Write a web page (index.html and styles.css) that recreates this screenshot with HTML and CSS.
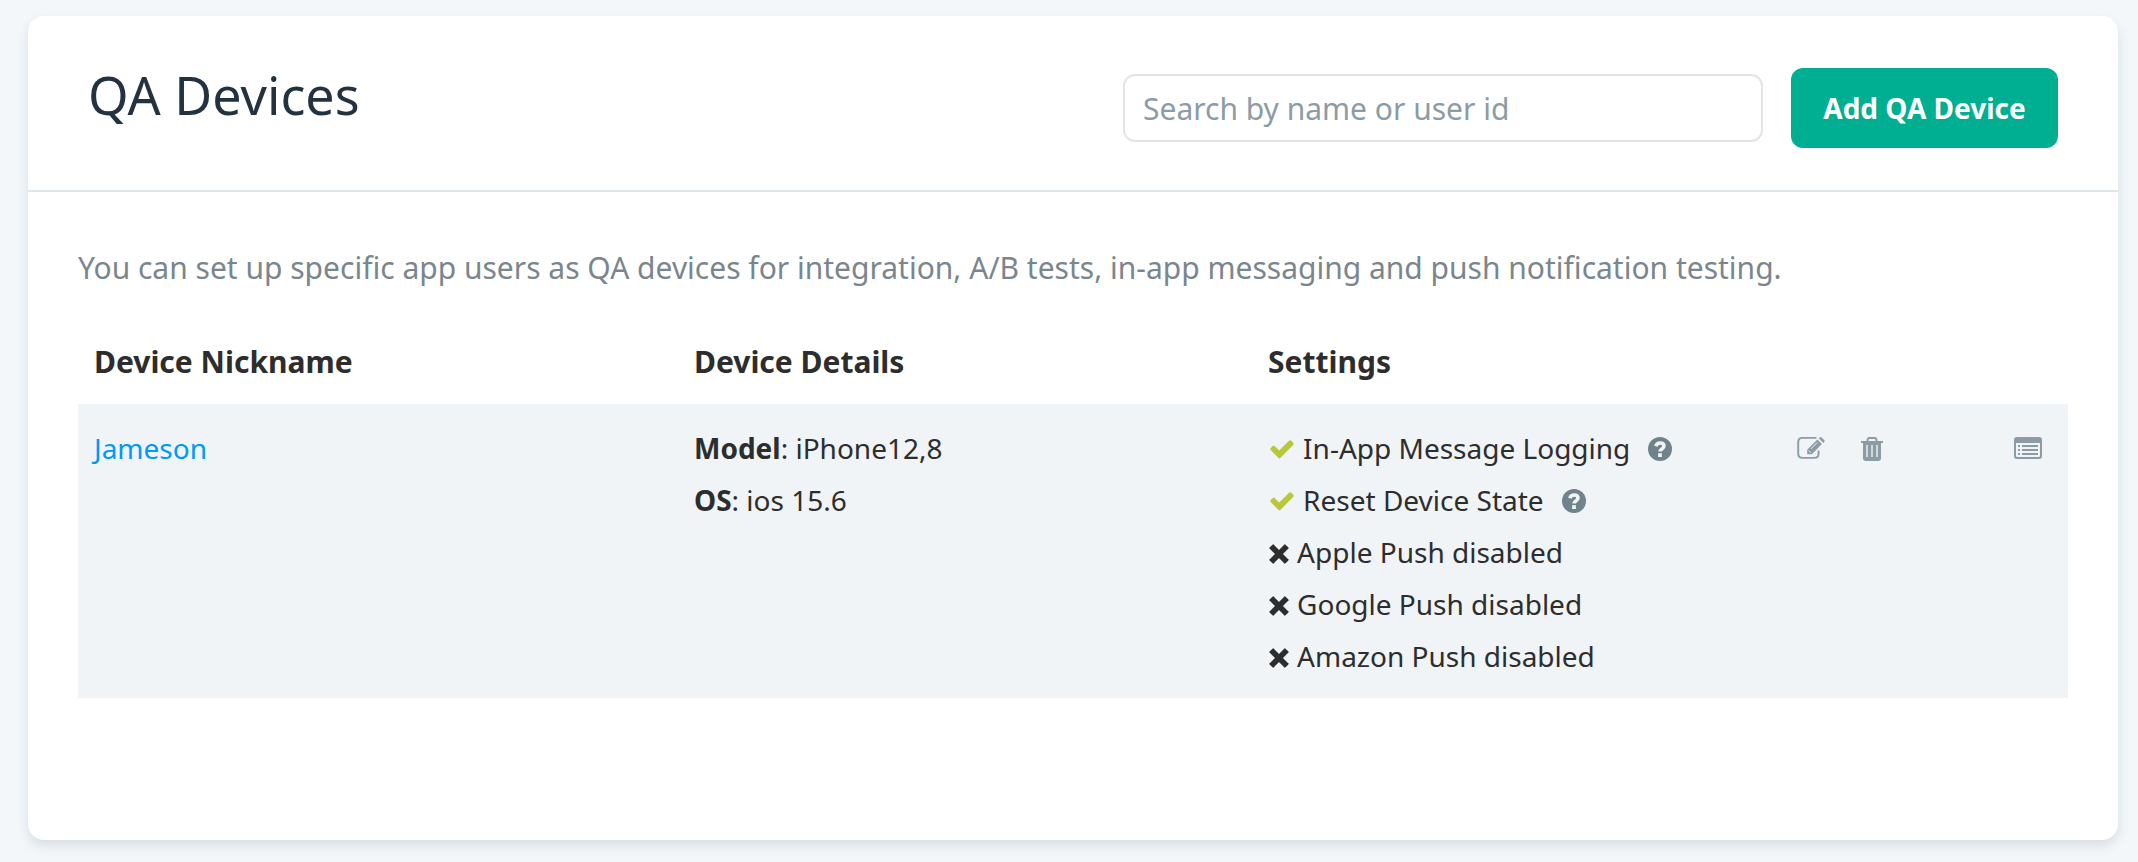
FILE: index.html
```html
<!DOCTYPE html>
<html lang="en">
<head>
<meta charset="utf-8">
<title>QA Devices</title>
<link rel="stylesheet" href="styles.css">
</head>
<body>
<svg class="sprite" aria-hidden="true">
  <symbol id="check" viewBox="0 0 24 20"><path d="M.700 8.100 2.800 6Q3.700 5.100 4.600 6L9.200 10.600 19.300.600Q20.200-.300 21.100.600L23.400 2.900Q24.300 3.800 23.400 4.700L10.300 18Q9.400 18.900 8.500 18L.700 9.900Q-.200 9 .700 8.100Z" fill="currentColor"/></symbol>
  <symbol id="cross" viewBox="0 0 20 20"><path d="M4.300 4.300 15.700 15.700M15.700 4.300 4.300 15.700" fill="none" stroke="currentColor" stroke-width="5.600" stroke-linecap="square"/><path d="M4 1.600 1.600 4M16 1.600 18.400 4M4 18.400 1.600 16M16 18.400 18.400 16" fill="none" stroke="currentColor" stroke-width="2" stroke-linecap="round"/></symbol>
  <symbol id="help" viewBox="0 0 24 24"><circle cx="12" cy="12" r="12" fill="currentColor"/><path d="M7.900 9.300C8.500 7 10 6 12 6c2.400 0 4 1.200 4 3.100 0 2.900-4 2.700-4 5.400" fill="none" stroke="#f0f4f7" stroke-width="3.600"/><path d="M10.100 16.200h3.800v3.800h-3.800z" fill="#f0f4f7"/></symbol>
  <symbol id="edit" viewBox="0 1 28 24"><path d="M19.500 1.900H5.500Q1.200 1.900 1.200 6.200V17.500Q1.200 21.900 5.500 21.900H17.500Q21.600 21.900 21.600 17.500V14.500" fill="none" stroke="currentColor" stroke-width="1.900"/><path d="M10.200 13.800 20.400 3.600 24.900 8.100 14.900 18.300H10.200Z M21.800 2.300 22.600 1.500Q23.600.700 24.600 1.600L27.100 4.100Q28.100 5.100 27.200 6.100L26.300 6.900Z" fill="currentColor"/><path d="M14 12.800 20.100 6.700M11.800 14.600 13.900 16.700" stroke="#f0f4f7" stroke-width="1"/></symbol>
  <symbol id="trash" viewBox="0 0 22 24"><path d="M6.500 4.500V3Q6.500 1 8.500 1H13.500Q15.500 1 15.500 3V4.500" fill="none" stroke="currentColor" stroke-width="1.900"/><path d="M0 4H22V6H20V21Q20 24 17 24H5Q2 24 2 21V6H0ZM5.300 8V20H6.700V8ZM10.300 8V20H11.700V8ZM15.300 8V20H16.700V8Z" fill="currentColor" fill-rule="evenodd"/></symbol>
  <symbol id="log" viewBox="0 0 28 22"><path d="M3 0H25Q28 0 28 3V19Q28 22 25 22H3Q0 22 0 19V3Q0 0 3 0ZM2 6V18.500Q2 20 3.500 20H24.500Q26 20 26 18.500V6Z" fill="currentColor" fill-rule="evenodd"/><path d="M4 8h2v2H4zM8 8h16v2H8zM4 12h2v2H4zM8 12h16v2H8zM4 16h2v2H4zM8 16h16v2H8z" fill="currentColor"/></symbol>
</svg>
<main class="card">
  <header class="card-header">
    <h1 class="title">QA Devices</h1>
    <div class="tools">
      <input class="search" type="search" aria-label="Search by name or user id" placeholder="Search by name or user id">
      <button class="add" type="button">Add QA Device</button>
    </div>
  </header>
  <section class="card-body">
    <p class="intro">You can set up specific app users as QA devices for integration, A/B tests, in-app messaging and push notification testing.</p>
    <table class="devices">
      <colgroup><col class="col-name"><col class="col-details"><col class="col-settings"><col class="col-actions"></colgroup>
      <thead>
        <tr><th scope="col">Device Nickname</th><th scope="col">Device Details</th><th scope="col">Settings</th><td></td></tr>
      </thead>
      <tbody>
        <tr>
          <td><a class="name" href="#jameson">Jameson</a></td>
          <td>
            <div><strong>Model</strong>: iPhone12,8</div>
            <div><strong>OS</strong>: ios 15.6</div>
          </td>
          <td>
            <ul class="settings">
              <li class="setting"><svg class="check"><use href="#check"/></svg>In-App Message Logging<button class="icon-button help" type="button" aria-label="About in-app message logging"><svg class="help-icon"><use href="#help"/></svg></button></li>
              <li class="setting"><svg class="check"><use href="#check"/></svg>Reset Device State<button class="icon-button help" type="button" aria-label="About reset device state"><svg class="help-icon"><use href="#help"/></svg></button></li>
              <li class="setting"><svg class="cross"><use href="#cross"/></svg>Apple Push disabled</li>
              <li class="setting"><svg class="cross"><use href="#cross"/></svg>Google Push disabled</li>
              <li class="setting"><svg class="cross"><use href="#cross"/></svg>Amazon Push disabled</li>
            </ul>
          </td>
          <td>
            <div class="actions">
              <button class="icon-button" type="button" aria-label="Edit"><svg class="edit-icon"><use href="#edit"/></svg></button>
              <button class="icon-button" type="button" aria-label="Delete"><svg class="trash-icon"><use href="#trash"/></svg></button>
              <button class="icon-button log" type="button" aria-label="View log"><svg class="log-icon"><use href="#log"/></svg></button>
            </div>
          </td>
        </tr>
      </tbody>
    </table>
  </section>
</main>
</body>
</html>
```
FILE: styles.css
```css
* { box-sizing: border-box; }

body {
  margin: 0;
  padding: 16px 20px 22px 28px;
  background: #f3f7fa;
  color: #2d2d2d;
  font: 28px/52px "Noto Sans", sans-serif;
}

.sprite { display: none; }

.card {
  background: #fff;
  border-radius: 16px;
  box-shadow: 0 6px 12px rgba(34, 51, 64, 0.12);
}

.card-header {
  display: flex;
  align-items: flex-start;
  justify-content: space-between;
  padding: 52px 60px 42px;
  border-bottom: 2px solid #dfe5e8;
}

.title {
  margin: 0;
  color: #223240;
  font-size: 52px;
  font-weight: 400;
  line-height: 54px;
}

.tools {
  display: flex;
  align-items: center;
  gap: 28px;
}

.search {
  width: 640px;
  height: 68px;
  padding: 0 18px;
  border: 2px solid #dfe5e8;
  border-radius: 12px;
  background: #fff;
  color: #2d2d2d;
  font: 30px "Noto Sans", sans-serif;
  appearance: none;
}

.search::placeholder { color: #8c9ca5; }

.add {
  min-width: 267px;
  height: 80px;
  padding: 0 32px;
  border: 0;
  border-radius: 12px;
  background: #00af91;
  color: #fff;
  font: 700 28px "Noto Sans", sans-serif;
}

.card-body { padding: 50px 50px 142px; }

.intro {
  margin: 0;
  color: #7a868d;
  font-size: 30px;
}

.devices {
  width: 100%;
  margin-top: 28px;
  border-collapse: collapse;
  table-layout: fixed;
}

.col-name { width: 30.15%; }
.col-details { width: 28.85%; }
.col-settings { width: 26%; }

.devices th {
  padding: 14px 16px 16px;
  font-size: 30px;
  font-weight: 700;
  text-align: left;
}

.devices tbody { background: #f0f4f7; }

.devices tbody td {
  padding: 18px 16px 16px;
  vertical-align: top;
}

.name {
  color: #0099f7;
  text-decoration: none;
}

.settings {
  margin: 0;
  padding: 0;
  list-style: none;
}

.setting {
  display: flex;
  align-items: center;
}

.check {
  width: 24px;
  height: 20px;
  margin: 4px 9px 0 2px;
  color: #b9c738;
}

.cross {
  width: 20px;
  height: 20px;
  margin: 4px 8px 0 1px;
}

.icon-button {
  display: flex;
  padding: 0;
  border: 0;
  background: none;
  color: #8c9ca5;
}

.help {
  margin: 2px 0 0 18px;
  color: #70828c;
}

.help-icon { width: 24px; height: 24px; }

.actions {
  display: flex;
  align-items: flex-start;
  gap: 36px;
  padding: 15px 10px 0 12px;
}

.log { margin-left: auto; }
.edit-icon { width: 28px; height: 24px; }
.trash-icon { width: 22px; height: 24px; }
.log-icon { width: 28px; height: 22px; }
```
